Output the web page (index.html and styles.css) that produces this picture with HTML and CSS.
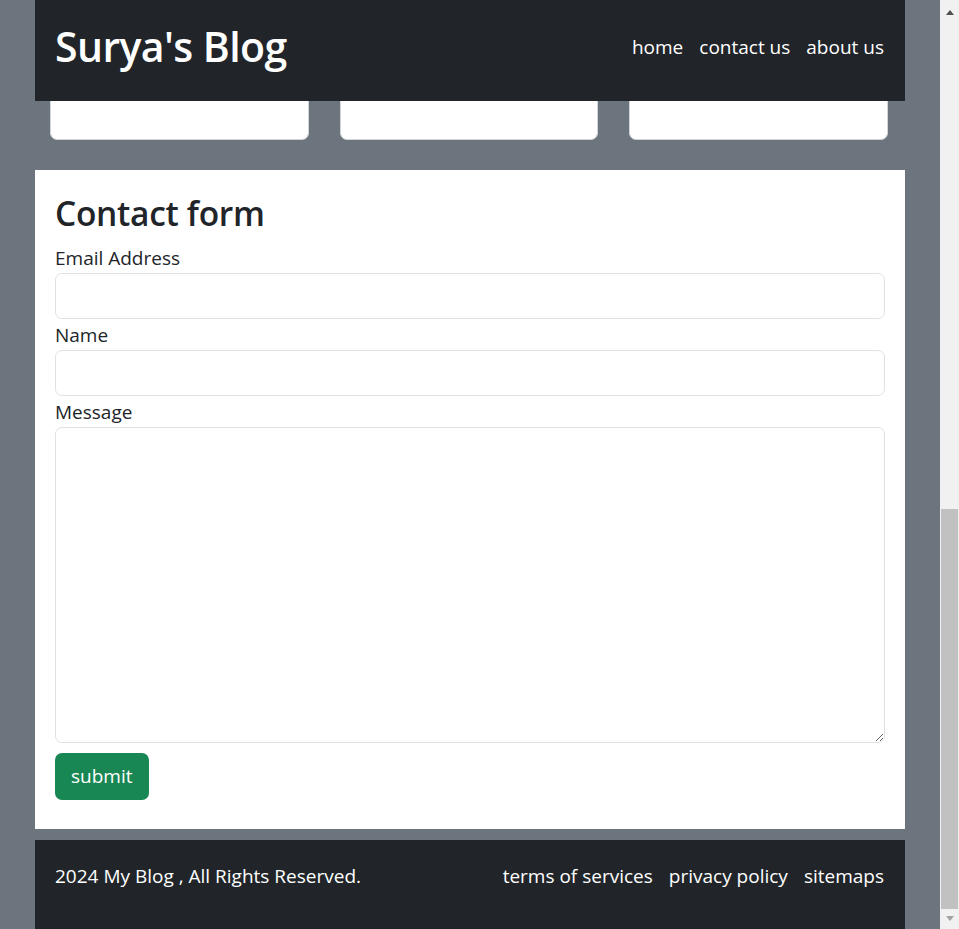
FILE: index.html
```html
<!DOCTYPE html>
<html lang="en">
<head>
<meta charset="utf-8">
<title>Surya's Blog</title>
<link rel="stylesheet" href="styles.css">
</head>
<body>
<div class="window">
  <div class="viewport">
    <header class="topbar">
      <h1 class="brand">Surya's Blog</h1>
      <nav class="nav">
        <a href="#" class="nav-link">home</a>
        <a href="#" class="nav-link">contact us</a>
        <a href="#" class="nav-link">about us</a>
      </nav>
    </header>
    <main class="page">
      <div class="cards">
        <article class="card"></article>
        <article class="card"></article>
        <article class="card"></article>
      </div>
      <section class="contact">
        <h2 class="contact-title">Contact form</h2>
        <form class="form">
          <label class="label" for="email">Email Address</label>
          <input class="field" id="email" type="email">
          <label class="label" for="name">Name</label>
          <input class="field" id="name" type="text">
          <label class="label" for="msg">Message</label>
          <textarea class="field area" id="msg"></textarea>
          <button class="btn" type="button">submit</button>
        </form>
      </section>
      <footer class="footer">
        <span class="copy">2024 My Blog , All Rights Reserved.</span>
        <nav class="nav">
          <a href="#" class="nav-link">terms of services</a>
          <a href="#" class="nav-link">privacy policy</a>
          <a href="#" class="nav-link">sitemaps</a>
        </nav>
      </footer>
    </main>
  </div>
  <div class="scrollbar">
    <div class="sb-btn sb-up"><span class="tri-up"></span></div>
    <div class="sb-track"><div class="sb-thumb"></div></div>
    <div class="sb-btn sb-down"><span class="tri-down"></span></div>
  </div>
</div>
</body>
</html>
```
FILE: styles.css
```css
* { box-sizing: border-box; }
html, body { margin: 0; padding: 0; }
body {
  font-family: "Open Sans", "Noto Sans", "Liberation Sans", sans-serif;
  color: #212529;
  background: #6c757d;
  overflow: hidden;
}
.window {
  display: flex;
  width: 959px;
  height: 929px;
}
.viewport {
  position: relative;
  width: 940px;
  height: 929px;
  overflow: hidden;
  display: flex;
  flex-direction: column;
  justify-content: flex-end;
  background: #6c757d;
}
.topbar {
  position: absolute;
  top: 0;
  left: 35px;
  width: 870px;
  height: 101px;
  background: #212529;
  display: flex;
  align-items: center;
  justify-content: space-between;
  padding: 0 21px 7px 20px;
  z-index: 2;
}
.brand {
  margin: 0;
  font-size: 41px;
  font-weight: 600;
  line-height: 1.2;
  color: #fff;
  letter-spacing: -0.6px;
}
.nav {
  display: flex;
  gap: 16px;
}
.nav-link {
  color: #fff;
  text-decoration: none;
  font-size: 19px;
  line-height: 27px;
}
.page {
  flex-shrink: 0;
  width: 870px;
  margin: 0 auto;
  display: flex;
  flex-direction: column;
}
.cards {
  display: grid;
  grid-template-columns: repeat(3, 1fr);
  column-gap: 31px;
  padding: 0 17px 0 15px;
  margin-bottom: 30px;
}
.card {
  height: 300px;
  background: #fff;
  border: 1px solid #d3d6d9;
  border-radius: 7px;
}
.contact {
  background: #fff;
  padding: 23px 20px 29px 20px;
  margin-bottom: 11px;
}
.contact-title {
  margin: 0 0 9px 0;
  font-size: 33.5px;
  font-weight: 600;
  line-height: 1.2;
  letter-spacing: -0.3px;
}
.form {
  display: flex;
  flex-direction: column;
  align-items: flex-start;
}
.label {
  display: block;
  font-size: 19px;
  line-height: 29px;
  height: 31px;
  padding-top: 2px;
}
.field {
  display: block;
  width: 100%;
  height: 46px;
  margin: 0;
  border: 1px solid #dee2e6;
  border-radius: 7px;
  background: #fff;
  font-family: inherit;
  font-size: 19px;
  padding: 7px 14px;
  outline: none;
}
.area {
  height: 316px;
  resize: vertical;
}
.btn {
  margin-top: 10px;
  height: 47px;
  padding: 0 16px;
  border: 0;
  border-radius: 7px;
  background: #198754;
  color: #fff;
  font-family: inherit;
  font-size: 19px;
  line-height: 27px;
}
.footer {
  background: #212529;
  color: #fff;
  height: 89px;
  display: flex;
  align-items: flex-start;
  justify-content: space-between;
  padding: 23px 21px 0 20px;
}
.copy {
  font-size: 19px;
  line-height: 27px;
}
.scrollbar {
  width: 19px;
  height: 929px;
  background: #f1f1f1;
  display: flex;
  flex-direction: column;
}
.sb-btn {
  height: 17px;
  display: flex;
  justify-content: center;
  padding-left: 1px;
}
.sb-up { padding-top: 10px; }
.sb-down { padding-top: 4px; }
.tri-up {
  width: 0;
  height: 0;
  border-left: 4.5px solid transparent;
  border-right: 4.5px solid transparent;
  border-bottom: 5px solid #505050;
}
.tri-down {
  width: 0;
  height: 0;
  border-left: 4.5px solid transparent;
  border-right: 4.5px solid transparent;
  border-top: 5px solid #a3a3a3;
}
.sb-track {
  flex: 1;
  padding-left: 1px;
}
.sb-thumb {
  width: 17px;
  height: 400px;
  margin-top: 492px;
  background: #c1c1c1;
}
```
